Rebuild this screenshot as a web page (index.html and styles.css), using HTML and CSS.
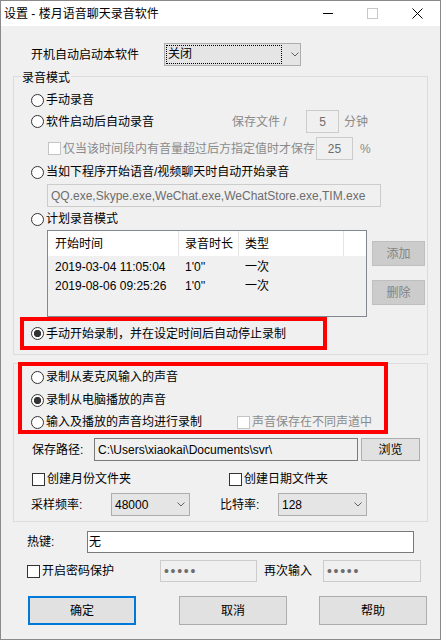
FILE: index.html
```html
<!DOCTYPE html>
<html lang="zh-CN">
<head>
  <meta charset="UTF-8" />
  <meta name="viewport" content="width=device-width, initial-scale=1.0" />
  <title>设置 - 楼月语音聊天录音软件</title>
  <link rel="stylesheet" href="styles.css">
</head>
<body>
<div class="window">
  <div class="titlebar">
    <span class="title">设置 - 楼月语音聊天录音软件</span>
    <div class="caps">
      <span class="cap cap-min"><i></i></span>
      <span class="cap cap-max"><i></i></span>
      <span class="cap cap-close">
        <svg width="11" height="11" viewBox="0 0 11 11"><path d="M0.5 0.5L10.5 10.5M10.5 0.5L0.5 10.5" stroke="#000" stroke-width="1" fill="none"/></svg>
      </span>
    </div>
  </div>

  <div class="client">
    <div class="row r-startup">
      <span class="w-startup">开机自动启动本软件</span>
      <div class="combo w-startup-combo">
        <span class="focus-rect">关闭</span>
        <svg class="chev" width="8" height="5" viewBox="0 0 8 5"><path d="M0.5 0.5L4 4L7.5 0.5" fill="none" stroke="#606060"/></svg>
      </div>
    </div>

    <fieldset class="group group-mode">
      <legend>录音模式</legend>
      <div class="row opt r-manual"><span class="radio"></span>手动录音</div>

      <div class="row r-auto">
        <span class="row opt w-auto"><span class="radio"></span>软件启动后自动录音</span>
        <span class="gray w-savefile">保存文件 /</span>
        <span class="edit edit-off num w-min">5</span>
        <span class="gray unit-min">分钟</span>
      </div>

      <div class="row r-threshold">
        <span class="check check-off"></span>
        <span class="gray w-threshold">仅当该时间段内有音量超过后方指定值时才保存</span>
        <span class="edit edit-off num w-pct">25</span>
        <span class="gray unit-pct">%</span>
      </div>

      <div class="row opt r-apps"><span class="radio"></span>当如下程序开始语音/视频聊天时自动开始录音</div>
      <div class="edit edit-off apps">QQ.exe,Skype.exe,WeChat.exe,WeChatStore.exe,TIM.exe</div>

      <div class="row opt r-plan"><span class="radio"></span>计划录音模式</div>

      <div class="r-list">
        <div class="listview">
          <div class="lv-head">
            <span class="lv-c1">开始时间</span>
            <span class="lv-c2">录音时长</span>
            <span class="lv-c3">类型</span>
            <span></span>
          </div>
          <div class="lv-row first">
            <span class="lv-c1">2019-03-04 11:05:04</span>
            <span class="lv-c2">1'0''</span>
            <span class="lv-c3">一次</span>
          </div>
          <div class="lv-row">
            <span class="lv-c1">2019-08-06 09:25:26</span>
            <span class="lv-c2">1'0''</span>
            <span class="lv-c3">一次</span>
          </div>
        </div>
        <div class="list-btns">
          <span class="btn btn-off">添加</span>
          <span class="btn btn-off">删除</span>
        </div>
      </div>

      <div class="row mark mark-timed"><span class="radio on"></span>手动开始录制，并在设定时间后自动停止录制</div>
    </fieldset>

    <div class="group group-audio">
      <div class="mark mark-source">
        <div class="row opt src-1"><span class="radio"></span>录制从麦克风输入的声音</div>
        <div class="row opt src-2"><span class="radio on"></span>录制从电脑播放的声音</div>
        <div class="row src-3">
          <span class="row opt w-both"><span class="radio"></span>输入及播放的声音均进行录制</span>
          <span class="check check-off"></span><span class="gray">声音保存在不同声道中</span>
        </div>
      </div>

      <div class="row r-path">
        <span class="w-path">保存路径:</span>
        <span class="edit edit-ro w-path-edit">C:\Users\xiaokai\Documents\svr\</span>
        <span class="btn w-browse">浏览</span>
      </div>

      <div class="row r-folders">
        <span class="row w-month"><span class="check"></span>创建月份文件夹</span>
        <span class="row"><span class="check"></span>创建日期文件夹</span>
      </div>

      <div class="row r-rate">
        <span class="w-rate">采样频率:</span>
        <div class="combo w-rate-combo">
          <span class="combo-text">48000</span>
          <svg class="chev" width="8" height="5" viewBox="0 0 8 5"><path d="M0.5 0.5L4 4L7.5 0.5" fill="none" stroke="#606060"/></svg>
        </div>
        <span class="w-bitrate">比特率:</span>
        <div class="combo w-bitrate-combo">
          <span class="combo-text">128</span>
          <svg class="chev" width="8" height="5" viewBox="0 0 8 5"><path d="M0.5 0.5L4 4L7.5 0.5" fill="none" stroke="#606060"/></svg>
        </div>
      </div>
    </div>

    <div class="row r-hotkey">
      <span class="w-hotkey">热键:</span>
      <span class="edit w-hotkey-edit">无</span>
    </div>

    <div class="row r-pwd">
      <span class="row w-pwd"><span class="check"></span>开启密码保护</span>
      <span class="edit edit-off dots w-pwd1">•••••</span>
      <span class="w-again">再次输入</span>
      <span class="edit edit-off dots w-pwd2">•••••</span>
    </div>

    <div class="row r-actions">
      <span class="btn btn-default act act-ok">确定</span>
      <span class="btn act act-cancel">取消</span>
      <span class="btn act act-help">帮助</span>
    </div>
  </div>
</div>
</body>
</html>
```

FILE: styles.css
```css
* { box-sizing: border-box; }
body { margin: 0; font-family: "Liberation Sans", "Noto Sans CJK SC", sans-serif; font-size: 12px; line-height: 16px; color: #000; background: #fff; }

.window { width: 441px; height: 640px; border: 1px solid #8a8a8a; background: #f0f0f0; display: flex; flex-direction: column; }
.titlebar { height: 25px; flex: none; background: #fff; display: flex; align-items: center; padding-left: 3px; }
.title { flex: 1; }
.caps { display: flex; height: 100%; }
.cap { width: 45px; display: flex; align-items: center; justify-content: center; }
.cap i { display: block; }
.cap-min i { width: 10px; height: 1px; background: #000; }
.cap-max i { width: 11px; height: 11px; border: 1px solid #c8c8c8; }
.cap-close svg { display: block; }

.client { flex: 1; padding: 0 12px; }
.row { display: flex; align-items: center; }
.gray { color: #8a8a8a; }

.radio { width: 13px; height: 13px; flex: none; border: 1px solid #333; border-radius: 50%; background: #fff; margin-right: 2px; }
.radio.on { background: radial-gradient(circle, #333 0 3.4px, #fff 3.9px); }
.check { width: 13px; height: 13px; flex: none; border: 1px solid #333; background: #fff; margin-right: 2px; }
.check-off { border-color: #c4c4c4; }

.edit { display: flex; align-items: center; height: 23px; border: 1px solid #7a7a7a; background: #fff; padding-left: 1px; flex: none; white-space: nowrap; overflow: hidden; }
.edit-off { background: #f0f0f0; border-color: #cccccc; color: #6d6d6d; }
.edit-ro { background: #f0f0f0; padding-left: 3px; }
.num { justify-content: center; padding-left: 0; }

.combo { display: flex; align-items: center; height: 23px; border: 1px solid #adadad; background: #e5e5e5; flex: none; }
.combo-text { flex: 1; padding-left: 3px; }
.chev { flex: none; margin-right: 4px; }
.focus-rect { flex: none; width: 116px; height: 19px; margin-left: 1px; border: 1px dotted #000; padding-left: 1px; line-height: 17px; margin-right: 9px; }

.btn { display: flex; align-items: center; justify-content: center; flex: none; border: 1px solid #adadad; background: #e1e1e1; }
.btn-off { background: #cccccc; border-color: #bfbfbf; color: #838383; }
.btn-default { border: 2px solid #0078d7; }

/* 开机启动 */
.r-startup { margin-top: 17px; height: 23px; }
.w-startup { width: 133px; margin-left: 18px; }
.w-startup-combo { width: 137px; }

/* 分组框 */
.group { margin: 0; padding: 0; border: 1px solid #dcdcdc; min-width: 0; }
.group legend { padding: 4px 1px 0; margin-left: 7px; line-height: 12px; }
.group-mode { margin-top: 2px; padding-bottom: 4px; }
.group-audio { margin-top: 8px; padding-bottom: 5px; }

.opt { padding-left: 17px; }
.r-manual { margin-top: 7px; height: 18px; }
.r-auto { margin-top: 1px; height: 23px; }
.w-auto { width: 218px; }
.w-savefile { width: 74px; }
.w-min { width: 33px; }
.unit-min { margin-left: 5px; }

.r-threshold { margin-top: 4px; height: 23px; padding-left: 34px; }
.w-threshold { width: 253px; }
.w-pct { width: 37px; }
.unit-pct { margin-left: 7px; }

.r-apps { margin-top: 3px; height: 18px; }
.apps { margin: 3px 0 0 33px; width: 334px; padding-left: 3px; }
.r-plan { margin-top: 3px; height: 18px; }

.r-list { display: flex; margin-top: 2px; padding-left: 33px; }
.listview { width: 320px; height: 87px; border: 1px solid #828790; background: #f0f0f0; }
.lv-head, .lv-row { display: grid; grid-template-columns: 131px 60px 105px 1fr; }
.lv-head { height: 25px; background: #fff; align-items: center; }
.lv-head span { height: 100%; display: flex; align-items: center; border-right: 1px solid #e5e5e5; }
.lv-head span:last-child { border-right: 0; }
.lv-row { height: 19px; align-items: center; }
.lv-row.first { margin-top: 1px; }
.lv-c1 { padding-left: 7px; }
.lv-c2, .lv-c3 { padding-left: 6px; }
.list-btns { margin-left: 5px; }
.list-btns .btn { width: 53px; height: 25px; }
.list-btns .btn:first-child { margin-top: 11px; }
.list-btns .btn + .btn { margin-top: 14px; }

/* 红框标注 */
.mark { border: 4px solid #ff0000; }
.mark-timed { margin-left: 6px; width: 307px; height: 33px; padding-left: 7px; }
.mark-source { margin: -2px 0 0 4px; width: 370px; height: 72px; }
.mark-source .opt { padding-left: 9px; height: 16px; }
.src-1 { margin-top: 3px; }
.src-2 { margin-top: 7px; }
.src-3 { margin-top: 6px; height: 16px; }
.w-both { width: 215px; }

.r-path { margin-top: 4px; height: 23px; }
.w-path { width: 62px; margin-left: 18px; }
.w-path-edit { width: 264px; }
.w-browse { width: 59px; height: 23px; margin-left: 3px; }

.r-folders { margin-top: 10px; height: 16px; padding-left: 18px; }
.w-month { width: 197px; }

.r-rate { margin-top: 6px; height: 23px; }
.w-rate { width: 80px; margin-left: 17px; }
.w-rate-combo { width: 79px; }
.w-bitrate { width: 58px; margin-left: 30px; }
.w-bitrate-combo { width: 89px; }

/* 热键、密码 */
.r-hotkey { margin-top: 9px; height: 22px; }
.w-hotkey { width: 60px; margin-left: 14px; }
.w-hotkey-edit { width: 327px; height: 22px; }

.r-pwd { margin-top: 7px; height: 22px; }
.w-pwd { width: 133px; margin-left: 14px; }
.dots { height: 22px; padding-left: 3px; font-size: 14px; letter-spacing: 1.7px; color: #6d6d6d; }
.w-pwd1 { width: 97px; }
.w-again { width: 59px; margin-left: 7px; }
.w-pwd2 { width: 98px; }

.r-actions { margin-top: 14px; }
.act { width: 108px; height: 29px; }
.act-ok { margin-left: 15px; }
.act-cancel { margin-left: 43px; }
.act-help { margin-left: 32px; }
```
